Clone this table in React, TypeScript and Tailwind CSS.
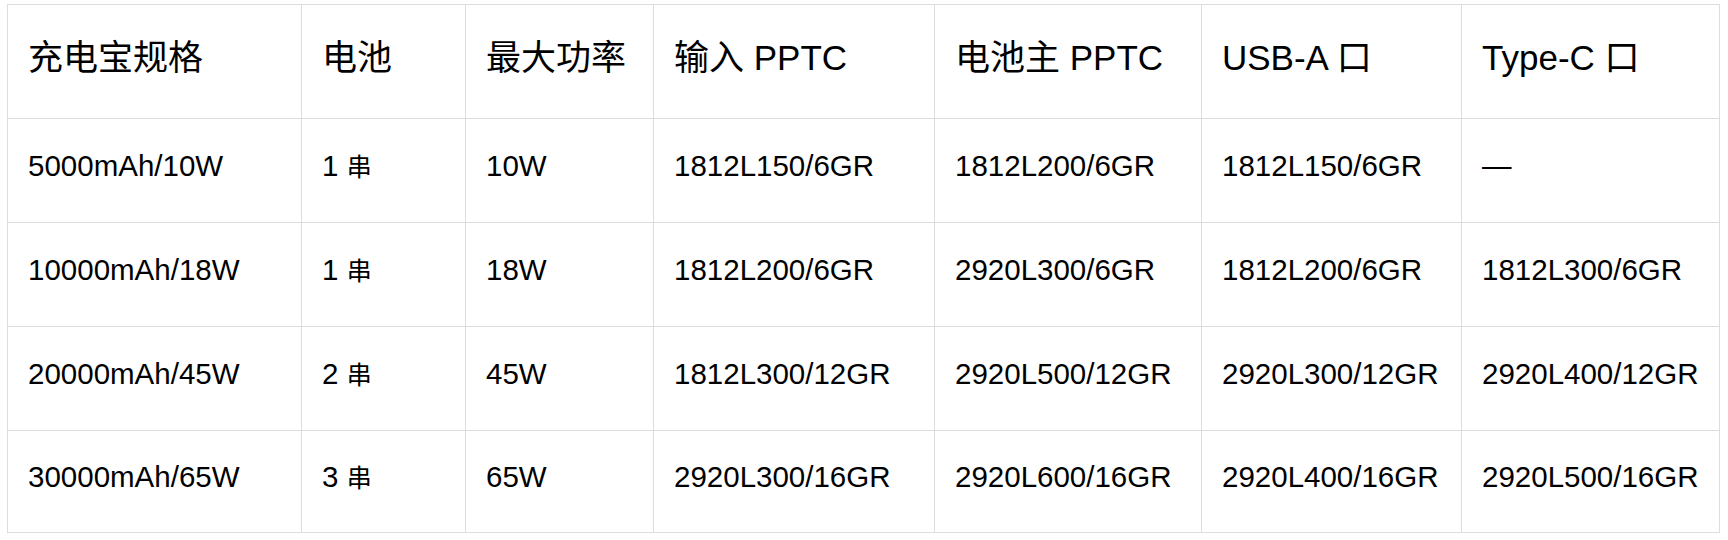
const headers = ["充电宝规格", "电池", "最大功率", "输入 PPTC", "电池主 PPTC", "USB-A 口", "Type-C 口"]

const rows = [
  ["5000mAh/10W", "1", "10W", "1812L150/6GR", "1812L200/6GR", "1812L150/6GR", "—"],
  ["10000mAh/18W", "1", "18W", "1812L200/6GR", "2920L300/6GR", "1812L200/6GR", "1812L300/6GR"],
  ["20000mAh/45W", "2", "45W", "1812L300/12GR", "2920L500/12GR", "2920L300/12GR", "2920L400/12GR"],
  ["30000mAh/65W", "3", "65W", "2920L300/16GR", "2920L600/16GR", "2920L400/16GR", "2920L500/16GR"],
]

const widths = ["w-[294px]", "w-[164px]", "w-[188px]", "w-[281px]", "w-[267px]", "w-[260px]", "w-[258px]"]

export default function App() {
  return (
    <div className="min-h-screen bg-white pl-[7px] pt-[4px] font-['Liberation_Sans','Noto_Sans_CJK_SC',sans-serif] text-black">
      <table className="table-fixed border-collapse w-[1712px]">
        <colgroup>
          {widths.map((w) => (
            <col key={w} className={w} />
          ))}
        </colgroup>
        <thead>
          <tr className="h-[114px]">
            {headers.map((h) => (
              <th key={h} className="border border-[#dddddd] pl-[20px] text-left align-middle font-normal text-[35px] leading-none">
                <span className="relative -top-[4px]">{h}</span>
              </th>
            ))}
          </tr>
        </thead>
        <tbody>
          {rows.map((r, ri) => (
            <tr key={r[0]} className={ri === rows.length - 1 ? "h-[102px]" : "h-[104px]"}>
              {r.map((c, i) => (
                <td key={i} className="border border-[#dddddd] pl-[20px] align-middle text-[29.5px] leading-none">
                  <span className="relative -top-[5px]">
                    {i === 1 ? (
                      <>
                        {c} <span className="text-[25px]">串</span>
                      </>
                    ) : (
                      c
                    )}
                  </span>
                </td>
              ))}
            </tr>
          ))}
        </tbody>
      </table>
    </div>
  )
}
